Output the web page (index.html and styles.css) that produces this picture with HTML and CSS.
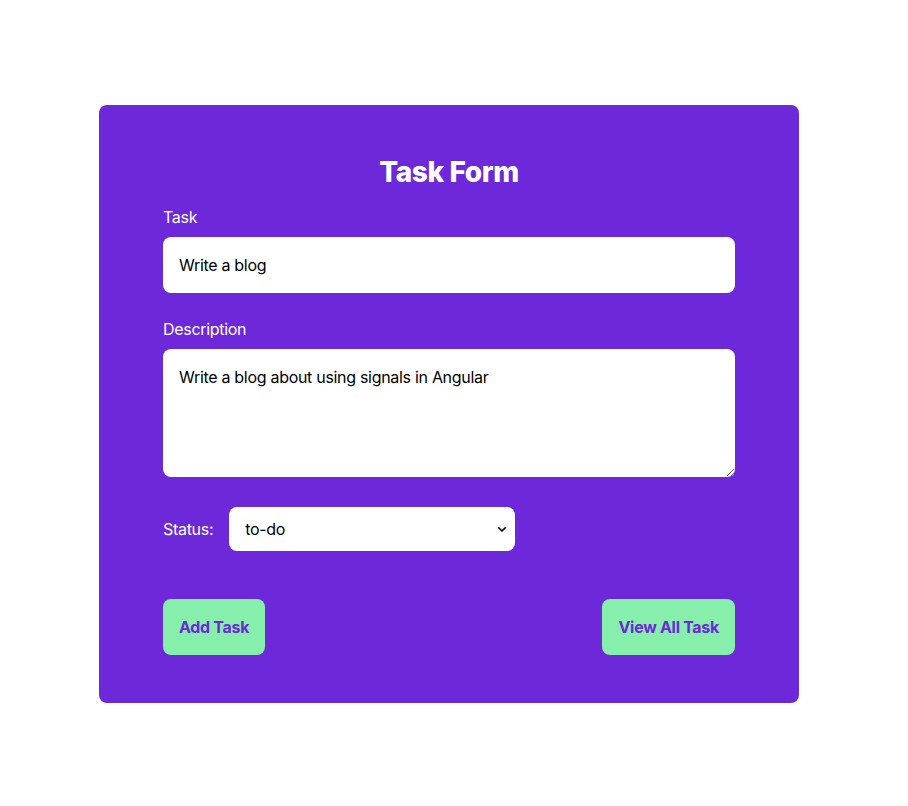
FILE: index.html
```html
<!DOCTYPE html>
<html>
<head>
<meta charset="utf-8">
<link rel="stylesheet" href="styles.css">
</head>
<body>
<main class="page">
  <form class="card">
    <h1 class="title">Task Form</h1>
    <div class="field">
      <label class="label">Task</label>
      <input class="input" type="text" value="Write a blog">
    </div>
    <div class="field">
      <label class="label">Description</label>
      <textarea class="textarea">Write a blog about using signals in Angular</textarea>
    </div>
    <div class="status-row">
      <label class="label">Status:</label>
      <div class="select-wrap">
        <select class="select"><option>to-do</option></select>
        <svg class="chev" width="10" height="10" viewBox="0 0 10 10"><path d="M1.5 3.5 L5 7 L8.5 3.5" fill="none" stroke="#000" stroke-width="1.6" stroke-linecap="round" stroke-linejoin="round"/></svg>
      </div>
    </div>
    <div class="actions">
      <button type="button" class="btn">Add Task</button>
      <button type="button" class="btn">View All Task</button>
    </div>
  </form>
</main>
</body>
</html>
```
FILE: styles.css
```css
* { box-sizing: border-box; }
html, body { margin: 0; padding: 0; background: #fff; }
body { font-family: Inter, "Noto Sans", sans-serif; letter-spacing: -0.3px; }
.page { padding-top: 105px; padding-left: 99px; }
.card {
  width: 700px;
  background: #6d28d9;
  border-radius: 8px;
  padding: 48px 64px;
  display: flex;
  flex-direction: column;
  color: #fff;
}
.title {
  margin: 1px 0 15px;
  font-size: 28px;
  line-height: 36px;
  font-weight: 800;
  text-align: center;
  letter-spacing: -0.4px;
}
.field { display: flex; flex-direction: column; gap: 8px; margin-bottom: 24px; }
.label { font-size: 16px; line-height: 24px; color: #fff; }
.input, .textarea, .select {
  font-family: Inter, "Noto Sans", sans-serif;
  letter-spacing: -0.3px;
  font-size: 16px;
  color: #000;
  background: #fff;
  border: none;
  border-radius: 8px;
  outline: none;
}
.input { height: 56px; padding: 0 16px; }
.textarea { height: 128px; padding: 16px; resize: vertical; display: block; line-height: 24px; }
.status-row { display: flex; align-items: center; gap: 16px; margin-top: 6px; }
.select-wrap { position: relative; width: 286px; height: 44px; }
.select {
  appearance: none;
  -webkit-appearance: none;
  width: 100%;
  height: 100%;
  padding: 0 16px;
}
.chev { position: absolute; right: 8px; top: 17px; pointer-events: none; }
.actions { display: flex; justify-content: space-between; margin-top: 48px; }
.btn {
  font-family: Inter, "Noto Sans", sans-serif;
  letter-spacing: -0.3px;
  font-size: 16px;
  font-weight: 700;
  color: #6d28d9;
  background: #86efac;
  border: none;
  border-radius: 8px;
  height: 56px;
  padding: 0 16px;
}
```
